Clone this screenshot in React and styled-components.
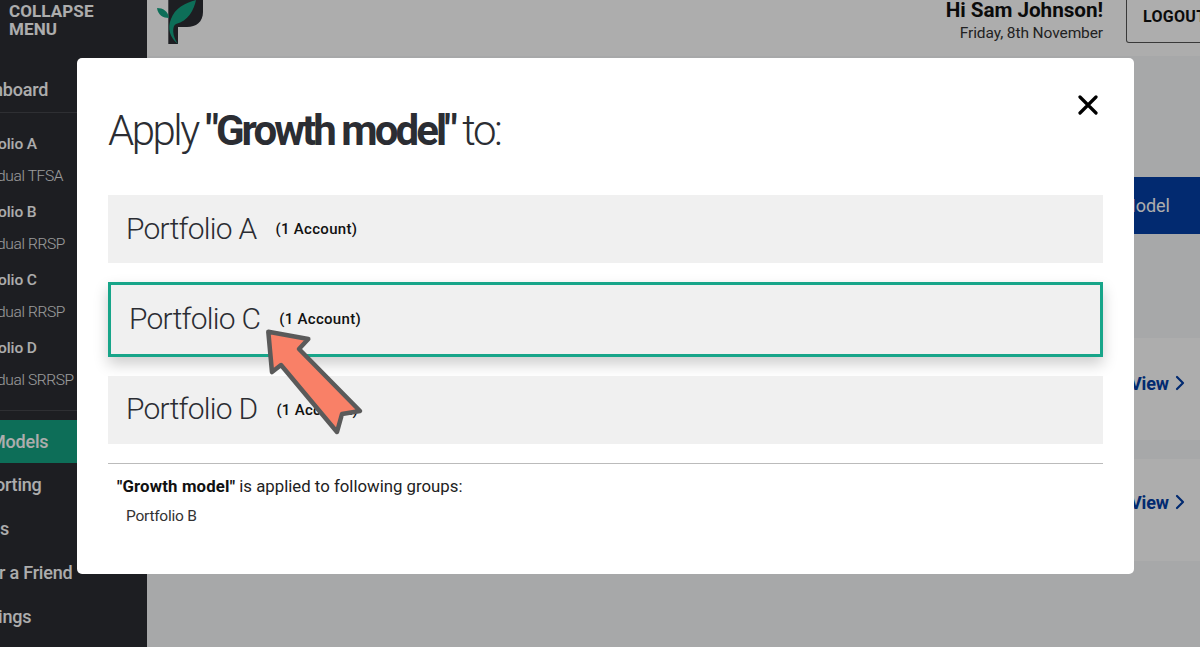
import React from "react";
import styled, { createGlobalStyle } from "styled-components";

const Global = createGlobalStyle`
  html, body { margin: 0; padding: 0; height: 100%; overflow: hidden; }
  body { font-family: Roboto, "Liberation Sans", sans-serif; background: #f7f8fa; color: #2b2d33; }
  #root { height: 100%; }
`;

const Page = styled.div`
  display: flex;
  width: 1200px;
  height: 647px;
  overflow: hidden;
`;
const Sidebar = styled.nav`
  flex: 0 0 147px;
  width: 147px;
  background: #2b2d33;
  color: #fff;
  overflow: hidden;
`;
const Collapse = styled.div`
  height: 68px;
  box-sizing: border-box;
  padding: 2px 0 0 9px;
  font-size: 17px;
  line-height: 18px;
  font-weight: 700;
  letter-spacing: 0.1px;
  color: #fff;
`;
const NavItem = styled.div`
  height: ${(p) => (p.$active ? 43 : 44)}px;
  line-height: 43px;
  text-indent: ${(p) => p.$indent}px;
  font-size: 18px;
  font-weight: 500;
  letter-spacing: -0.2px;
  white-space: nowrap;
  color: #fff;
  background: ${(p) => (p.$active ? "#14a382" : "transparent")};
`;
const Divider = styled.div`
  height: 1px;
  background: #44464c;
  margin: ${(p) => p.$margin};
`;
const Group = styled.div`
  height: 68px;
  white-space: nowrap;
`;
const GroupName = styled.div`
  font-size: 15.5px;
  line-height: 20px;
  font-weight: 500;
  letter-spacing: -0.1px;
  text-indent: -2px;
  color: #fff;
`;
const GroupSub = styled.div`
  font-size: 15.5px;
  line-height: 20px;
  margin-top: 12px;
  letter-spacing: -0.35px;
  text-indent: -3px;
  color: #e6e6e6;
  font-weight: 300;
`;
const Main = styled.main`
  flex: 1;
  min-width: 0;
  display: flex;
  flex-direction: column;
`;
const Header = styled.header`
  height: 56px;
  flex: 0 0 56px;
  background: #fff;
  display: flex;
  justify-content: space-between;
`;
const Logo = styled.svg`
  width: 65px;
  height: 50px;
  margin-left: 3px;
  display: block;
`;
const HeaderRight = styled.div`
  display: flex;
  gap: 23px;
  margin-right: -28px;
  flex: none;
`;
const Greeting = styled.div`
  text-align: right;
  white-space: nowrap;
`;
const Hi = styled.div`
  font-size: 20.7px;
  line-height: 20px;
  font-weight: 700;
  letter-spacing: -0.05px;
  color: #111;
`;
const DateLine = styled.div`
  font-size: 15.5px;
  line-height: 20px;
  margin-top: 3px;
  letter-spacing: -0.1px;
  color: #333;
`;
const Logout = styled.div`
  width: 102px;
  height: 43px;
  box-sizing: border-box;
  border: 1px solid #555;
  border-top: none;
  border-radius: 0 0 0 3px;
  font-size: 16px;
  font-weight: 700;
  padding: 7px 0 0 16px;
  color: #111;
  letter-spacing: 0.3px;
  white-space: nowrap;
`;
const Content = styled.div`
  flex: 1;
  display: flex;
  flex-direction: column;
  align-items: flex-end;
  padding-top: 121px;
`;
const AddButton = styled.div`
  width: 120px;
  height: 57px;
  background: #033ea5;
  color: #fff;
  font-size: 18px;
  line-height: 57px;
  padding-right: 30px;
  box-sizing: border-box;
  text-align: right;
`;
const Card = styled.div`
  width: 500px;
  height: 102px;
  background: #fff;
  margin-top: ${(p) => p.$top}px;
  display: flex;
  justify-content: flex-end;
  align-items: center;
  gap: 6px;
  padding: 0 15px ${(p) => p.$bottom}px 0;
  box-sizing: border-box;
  color: #033ea5;
  font-size: 18px;
  font-weight: 700;
  letter-spacing: -0.1px;
`;
const Chevron = styled.svg`
  width: 10px;
  height: 16px;
  display: block;
`;
const Backdrop = styled.div`
  position: fixed;
  inset: 0;
  background: rgba(0, 0, 0, 0.32);
`;
const Modal = styled.div`
  position: fixed;
  left: 77px;
  top: 58px;
  width: 1057px;
  height: 516px;
  box-sizing: border-box;
  padding: 47px 31px 0;
  background: #fff;
  border-radius: 5px;
`;
const Close = styled.svg`
  position: absolute;
  top: 37px;
  right: 36px;
  width: 20px;
  height: 20px;
`;
const Title = styled.h1`
  margin: 0;
  height: 90px;
  font-size: 42px;
  line-height: 52px;
  font-weight: 300;
  letter-spacing: -2.5px;
  color: #2b2d33;
  b { font-weight: 700; letter-spacing: -2.95px; }
`;
const Rows = styled.div`
  display: flex;
  flex-direction: column;
  gap: 19px;
`;
const Row = styled.div`
  height: ${(p) => (p.$selected ? 74.5 : 68)}px;
  box-sizing: border-box;
  background: #f0f0f0;
  display: flex;
  align-items: center;
  gap: 19px;
  padding: 0 0 2px 18px;
  border: ${(p) => (p.$selected ? "3px solid #17a589" : "none")};
  box-shadow: ${(p) => (p.$selected ? "0 7px 14px rgba(0,0,0,.2)" : "none")};
`;
const RowName = styled.span`
  font-size: 30px;
  font-weight: 300;
  letter-spacing: -0.75px;
  color: #2b2d33;
`;
const RowCount = styled.span`
  font-size: 15px;
  font-weight: 500;
  letter-spacing: 0.3px;
  margin-top: 2px;
  color: #111;
`;
const Rule = styled.div`
  height: 1px;
  background: #bbb;
  margin-top: 19px;
`;
const Applied = styled.p`
  margin: 12px 0 0 9px;
  font-size: 16.8px;
  line-height: 20px;
  letter-spacing: 0;
  color: #222;
  b { font-weight: 700; color: #111; letter-spacing: 0.15px; }
`;
const AppliedItem = styled.p`
  margin: 10px 0 0 18px;
  font-size: 15.5px;
  line-height: 20px;
  letter-spacing: -0.25px;
  color: #333;
`;
const Arrow = styled.svg`
  position: fixed;
  left: 255px;
  top: 325px;
  width: 115px;
  height: 115px;
`;

const groups = [
  ["olio A", "dual TFSA"],
  ["olio B", "dual RRSP"],
  ["olio C", "dual RRSP"],
  ["olio D", "dual SRRSP"],
];

const ChevronRight = () => (
  <Chevron viewBox="0 0 10 16">
    <path d="M2 2L8 8L2 14" fill="none" stroke="#033ea5" strokeWidth="2.2" strokeLinecap="round" strokeLinejoin="round" />
  </Chevron>
);

export default function App() {
  return (
    <>
      <Global />
      <Page>
        <Sidebar>
          <Collapse>COLLAPSE<br />MENU</Collapse>
          <NavItem $indent={-7}>nboard</NavItem>
          <Divider $margin="0 0 21px" />
          {groups.map(([name, sub]) => (
            <Group key={name}>
              <GroupName>{name}</GroupName>
              <GroupSub>{sub}</GroupSub>
            </Group>
          ))}
          <Divider $margin="4px 0 9px" />
          <NavItem $active $indent={-10}>Models</NavItem>
          <NavItem $indent={-5}>orting</NavItem>
          <NavItem $indent={0}>s</NavItem>
          <NavItem $indent={-1}>r a Friend</NavItem>
          <NavItem $indent={-2}>ings</NavItem>
        </Sidebar>
        <Main>
          <Header>
            <Logo viewBox="0 0 65 50">
              <path d="M18.3 0H53V12C53 22 46 27 37 27H28V44H18.3Z" fill="#2b2d33" />
              <path d="M28 44C20 38 17 28 21 19C25 8 35 3 46 0C44 10 38 21 26 24C22 26 22 36 28 44Z" fill="#14a382" />
              <path d="M7 8C13 8 18 11 19 18C13 18 8 15 7 8Z" fill="#14a382" />
            </Logo>
            <HeaderRight>
              <Greeting>
                <Hi>Hi Sam Johnson!</Hi>
                <DateLine>Friday, 8th November</DateLine>
              </Greeting>
              <Logout>LOGOUT</Logout>
            </HeaderRight>
          </Header>
          <Content>
            <AddButton>Model</AddButton>
            <Card $top={104} $bottom={12}>View <ChevronRight /></Card>
            <Card $top={19} $bottom={16}>View <ChevronRight /></Card>
          </Content>
        </Main>
      </Page>
      <Backdrop />
      <Modal>
        <Close viewBox="0 0 20 20">
          <path d="M2 2L18 18M18 2L2 18" stroke="#000" strokeWidth="3.2" strokeLinecap="round" />
        </Close>
        <Title>Apply <b>"Growth model"</b> to:</Title>
        <Rows>
          <Row><RowName>Portfolio A</RowName><RowCount>(1 Account)</RowCount></Row>
          <Row $selected><RowName>Portfolio C</RowName><RowCount>(1 Account)</RowCount></Row>
          <Row><RowName>Portfolio D</RowName><RowCount>(1 Account)</RowCount></Row>
        </Rows>
        <Rule />
        <Applied><b>"Growth model"</b> is applied to following groups:</Applied>
        <AppliedItem>Portfolio B</AppliedItem>
      </Modal>
      <Arrow viewBox="0 0 115 115">
        <path d="M13.3 6.7L53.3 14L44 24L105 86L87 89L82 107L26 40L17 47Z" fill="#f98067" stroke="#5a5a5a" strokeWidth="4.5" strokeLinejoin="round" />
      </Arrow>
    </>
  );
}
